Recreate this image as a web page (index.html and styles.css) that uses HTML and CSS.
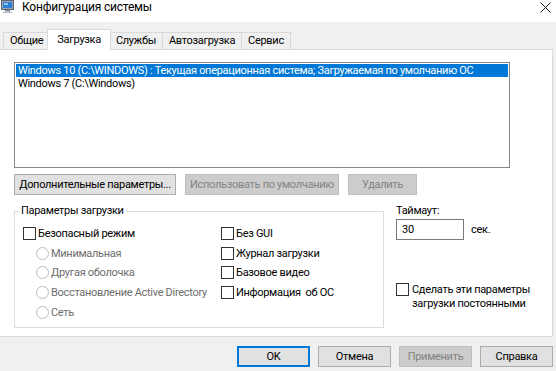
FILE: index.html
```html
<!DOCTYPE html>
<html lang="ru">
<head>
    <meta charset="UTF-8">
    <meta name="viewport" content="width=device-width, initial-scale=1.0">
    <title>Конфигурация системы</title>
    <link rel="stylesheet" href="styles.css">
</head>
<body>
    <div class="titlebar">
        <svg class="app-icon" width="13" height="13" viewBox="0 0 13 13">
            <rect x="0.5" y="0.5" width="12" height="9" fill="#9aa4b0" stroke="#5d6670"/>
            <rect x="2" y="2" width="9" height="6" fill="#2e7fd6"/>
            <rect x="3" y="3" width="4" height="2" fill="#8cc4f5"/>
            <rect x="4" y="10" width="5" height="1.5" fill="#7c8590"/>
            <rect x="2" y="11.5" width="9" height="1.5" fill="#b7bec6"/>
        </svg>
        <span class="title">Конфигурация системы</span>
        <svg class="close" width="11" height="11" viewBox="0 0 11 11">
            <path d="M0.5 0.5 L10.5 10.5 M10.5 0.5 L0.5 10.5" stroke="#111" stroke-width="1"/>
        </svg>
    </div>

    <div class="tabs">
        <div class="tab">Общие</div>
        <div class="tab active">Загрузка</div>
        <div class="tab">Службы</div>
        <div class="tab">Автозагрузка</div>
        <div class="tab">Сервис</div>
    </div>

    <div class="panel">
        <div class="os-list">
            <div class="os-item selected">Windows 10 (C:\WINDOWS) : Текущая операционная система; Загружаемая по умолчанию ОС</div>
            <div class="os-item">Windows 7 (C:\Windows)</div>
        </div>

        <div class="actions">
            <button class="btn btn-advanced">Дополнительные параметры...</button>
            <button class="btn btn-default" disabled>Использовать по умолчанию</button>
            <button class="btn btn-delete" disabled>Удалить</button>
        </div>

        <div class="options">
            <fieldset class="boot-group">
                <legend>Параметры загрузки</legend>
                <div class="boot-cols">
                    <div class="boot-col left">
                        <label class="opt"><span class="box"></span>Безопасный режим</label>
                        <label class="opt sub disabled"><span class="dot"></span>Минимальная</label>
                        <label class="opt sub disabled"><span class="dot"></span>Другая оболочка</label>
                        <label class="opt sub disabled"><span class="dot"></span>Восстановление Active Directory</label>
                        <label class="opt sub disabled"><span class="dot"></span>Сеть</label>
                    </div>
                    <div class="boot-col">
                        <label class="opt"><span class="box"></span>Без GUI</label>
                        <label class="opt"><span class="box"></span>Журнал загрузки</label>
                        <label class="opt"><span class="box"></span>Базовое видео</label>
                        <label class="opt"><span class="box"></span>Информация&nbsp; об ОС</label>
                    </div>
                </div>
            </fieldset>

            <div class="side">
                <div class="side-label">Таймаут:</div>
                <div class="timeout">
                    <span class="field">30</span>
                    <span class="unit">сек.</span>
                </div>
                <label class="permanent"><span class="box"></span><span>Сделать эти параметры<br>загрузки постоянными</span></label>
            </div>
        </div>
    </div>

    <div class="footer">
        <button class="btn btn-ok">OK</button>
        <button class="btn">Отмена</button>
        <button class="btn" disabled>Применить</button>
        <button class="btn">Справка</button>
    </div>
</body>
</html>
```

FILE: styles.css
```css
* {
    margin: 0;
    padding: 0;
    box-sizing: border-box;
}

body {
    font-family: Roboto, "Liberation Sans", sans-serif;
    font-size: 11px;
    letter-spacing: -0.3px;
    color: #000;
    background: #f0f0f0;
    width: 556px;
    height: 371px;
    overflow: hidden;
}

/* title bar */
.titlebar {
    height: 22px;
    background: #fff;
    display: flex;
    align-items: flex-start;
    padding: 0 5px 0 1px;
}

.title {
    margin-left: 8px;
    font-size: 12px;
    letter-spacing: -0.2px;
    line-height: 15px;
}

.close {
    margin-left: auto;
    margin-top: 2px;
}

/* tabs */
.tabs {
    display: flex;
    padding: 10px 0 0 3px;
}

.tab {
    height: 17px;
    line-height: 16px;
    padding: 0 6px;
    border: 1px solid #d9d9d9;
    border-bottom: none;
    margin-right: -1px;
    background: #f0f0f0;
    white-space: nowrap;
}

.tab.active {
    background: #fff;
    height: 21px;
    margin-top: -3px;
    margin-bottom: -1px;
    padding: 2px 9px 0;
    margin-left: -2px;
    margin-right: -2px;
    position: relative;
    z-index: 1;
}

/* main panel */
.panel {
    height: 288px;
    margin: 0 3px 0 -1px;
    background: #fff;
    border: 1px solid #d9d9d9;
    padding: 12px 0 0 14px;
}

.os-list {
    width: 496px;
    height: 106px;
    border: 1px solid #828790;
    padding: 1px;
}

.os-item {
    height: 13px;
    line-height: 13px;
    padding-left: 2px;
    white-space: nowrap;
}

.os-item.selected {
    background: #0078d7;
    color: #fff;
}

.actions {
    display: flex;
    margin-top: 6px;
}

.btn {
    font: inherit;
    letter-spacing: inherit;
    height: 21px;
    width: 73px;
    background: #e1e1e1;
    border: 1px solid #adadad;
    color: #000;
    white-space: nowrap;
}

.btn:disabled {
    background: #cccccc;
    border-color: #bfbfbf;
    color: #838383;
}

.btn-advanced {
    width: 162px;
}

.btn-default {
    width: 154px;
    margin-left: 9px;
}

.btn-delete {
    width: 69px;
    margin-left: 9px;
}

/* boot options */
.options {
    display: flex;
    margin-top: 9px;
}

.boot-group {
    width: 370px;
    height: 124px;
    border: 1px solid #dcdcdc;
    padding: 0 8px;
}

.boot-group legend {
    line-height: 14px;
    padding: 0 2px;
    margin-left: -4px;
}

.boot-cols {
    display: flex;
    padding-top: 6px;
}

.boot-col.left {
    width: 198px;
}

.opt {
    display: flex;
    align-items: center;
    height: 19.6px;
    white-space: nowrap;
}

.opt.sub {
    padding-left: 13px;
}

.opt.disabled {
    color: #6d6d6d;
}

.box {
    width: 13px;
    height: 13px;
    border: 1px solid #333;
    background: #fff;
    margin-right: 2px;
    flex-shrink: 0;
}

.dot {
    width: 13px;
    height: 13px;
    border: 1px solid #bcbcbc;
    border-radius: 50%;
    background: #fff;
    margin-right: 2px;
    flex-shrink: 0;
}

/* timeout column */
.side {
    margin-left: 12px;
}

.side-label {
    line-height: 14px;
}

.timeout {
    display: flex;
    align-items: center;
    margin-top: 1px;
}

.field {
    width: 68px;
    height: 21px;
    border: 1px solid #7a7a7a;
    padding-left: 5px;
    line-height: 19px;
}

.unit {
    margin-left: 7px;
}

.permanent {
    display: flex;
    align-items: flex-start;
    margin-top: 43px;
    line-height: 14px;
}

.permanent .box {
    margin-right: 3px;
}

/* dialog buttons */
.footer {
    display: flex;
    justify-content: flex-end;
    gap: 8px;
    padding: 9px 3px 0 0;
}

.btn-ok {
    border: 2px solid #0078d7;
}
```
